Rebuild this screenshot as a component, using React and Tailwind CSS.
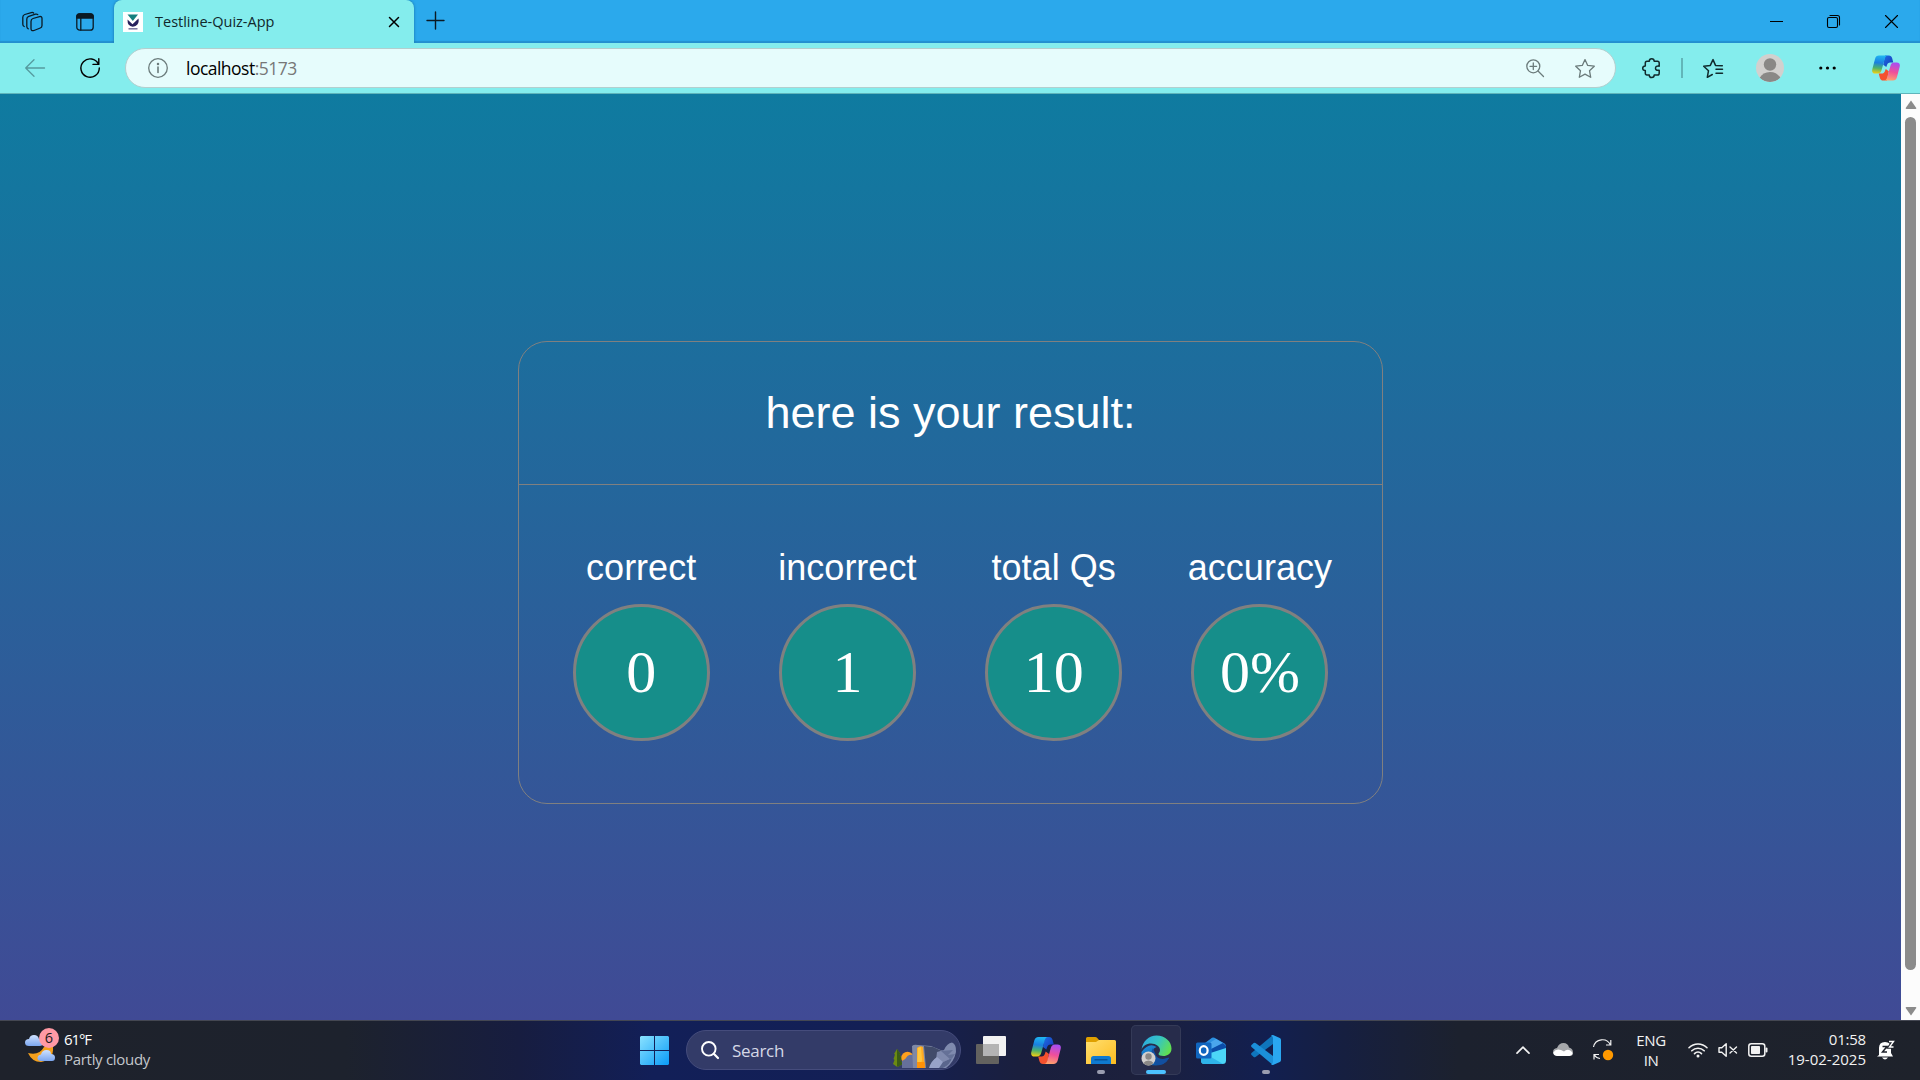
const UI = "font-['Open_Sans','Noto_Sans',sans-serif]";

const results = [
  { label: "correct", value: "0" },
  { label: "incorrect", value: "1" },
  { label: "total Qs", value: "10" },
  { label: "accuracy", value: "0%" },
];

function Icon({ w, h = w, className = "", children }) {
  return (
    <svg
      width={w}
      height={h}
      viewBox={`0 0 ${w} ${h}`}
      fill="none"
      stroke="currentColor"
      strokeWidth="1.3"
      strokeLinecap="round"
      strokeLinejoin="round"
      className={`block shrink-0 overflow-visible ${className}`}
    >
      {children}
    </svg>
  );
}

function Copilot({ w, h, id, className = "" }) {
  return (
    <svg width={w} height={h} viewBox="0 0 30 27" className={`block shrink-0 ${className}`}>
      <defs>
        <linearGradient id={`${id}a`} x1="0.4" y1="0" x2="0.3" y2="1">
          <stop offset="0" stopColor="#1fb5f2" />
          <stop offset="0.4" stopColor="#1a7fe0" />
          <stop offset="0.7" stopColor="#4db36b" />
          <stop offset="1" stopColor="#f5cf10" />
        </linearGradient>
        <linearGradient id={`${id}b`} x1="0.5" y1="0" x2="0.3" y2="1">
          <stop offset="0" stopColor="#a94df0" />
          <stop offset="0.5" stopColor="#ef4f9a" />
          <stop offset="1" stopColor="#ffa56b" />
        </linearGradient>
        <linearGradient id={`${id}c`} x1="0" y1="0" x2="1" y2="1">
          <stop offset="0" stopColor="#1d6fe6" />
          <stop offset="1" stopColor="#1636b8" />
        </linearGradient>
      </defs>
      <path d="M14 0H18C20 0 21 1 21.600 3L22.800 7.500H19.500C17.600 7.500 16.600 8.500 16 10.500L15.300 12.500L12 10Z" fill={`url(#${id}c)`} />
      <path d="M16 27H12C10 27 9 26 8.400 24L7.200 19.500H10.500C12.400 19.500 13.400 18.500 14 16.500L14.700 14.500L18 17Z" fill="#f4512e" />
      <path d="M7.500 0H17C15 0 14.300 1.400 13.700 3.500L10.200 16C9.500 18.300 8.300 19.500 6.200 19.500H3.500C.6 19.500 -.4 17.400 .4 14.700L3.300 3.500C4 1.200 5.200 0 7.500 0Z" fill={`url(#${id}a)`} />
      <path d="M22.500 27H13C15 27 15.700 25.600 16.300 23.500L19.800 11C20.500 8.700 21.700 7.500 23.800 7.500H26.500C29.400 7.500 30.400 9.600 29.600 12.300L26.700 23.500C26 25.800 24.800 27 22.500 27Z" fill={`url(#${id}b)`} />
    </svg>
  );
}

function TitleBar() {
  return (
    <div className="flex h-[43px] items-start bg-[#2ba9ec] text-[#0b1a24] shadow-[inset_0_-2px_1px_#238fd0]">
      <div className="flex h-[43px] w-[114px] items-center pl-[22px]">
        <Icon w={21} h={20}>
          <path d="M11 6.500 17.500 4.600Q20 4 20 6.500V13.500Q20 15.400 18.300 16L12 18.500Q9 19.400 9 16.500V9.500Q9 7.200 11 6.500Z" />
          <path d="M6.300 16.800Q4.800 16.300 4.800 14.500V7Q4.800 5 6.800 4.300L13.500 2.200Q15 1.800 15.800 2.600" />
          <path d="M2.200 14.500Q.8 14 .8 12.300V5.200Q.8 3.200 2.800 2.500L9.300 .6Q10.800 .2 11.600 1" />
        </Icon>
        <Icon w={18} h={18} className="ml-[33px]">
          <rect x="0.800" y="0.800" width="16.400" height="16.400" rx="3" />
          <path d="M.8 5V3.500Q.8 .8 3.500 .8H14.500Q17.200 .8 17.200 3.500V5Z" fill="currentColor" />
          <path d="M4.800 5V17" />
        </Icon>
      </div>
      <div className="flex h-[43px] w-[300px] items-center rounded-t-[8px] bg-[#84eded] pl-[9px] shadow-[0_0_3px_#1670a5] [clip-path:inset(0_-4px_0_-4px)]">
        <svg width="20" height="20" viewBox="0 0 20 20" className="block">
          <rect width="20" height="20" fill="#fff" />
          <path d="M4.500 2.500H15L9.800 9Z" fill="#15807f" />
          <path d="M4.500 7.500 9.500 12.200 15.500 6.500Q16.500 12 12.500 14Q8 15.800 5.500 12.500Q4.500 11 4.500 7.500Z" fill="#26215c" />
          <path d="M5.500 16.800H14.500" stroke="#77739c" strokeWidth="1.500" />
        </svg>
        <span className={`${UI} ml-[12px] w-[200px] whitespace-nowrap text-[14.5px] leading-[19px] text-[#10282c]`}>Testline-Quiz-App</span>
        <Icon w={10} className="ml-[34px] mt-px text-black">
          <path d="M.5.5 9.500 9.500M9.500.5.5 9.500" strokeWidth="1.500" />
        </Icon>
      </div>
      <Icon w={17} className="ml-[13px] mt-[12px]">
        <path d="M8.500 0V17M0 8.500H17" strokeWidth="1.400" />
      </Icon>
      <div className="ml-auto flex h-[43px] items-center pr-[22px] text-black">
        <Icon w={13}><path d="M0 6.500H13" strokeLinecap="butt" strokeWidth="1" /></Icon>
        <Icon w={13} className="ml-[44px]">
          <rect x="0.500" y="2.500" width="10" height="10" rx="1.500" strokeWidth="1.100" />
          <path d="M3 .5H10.500Q12.500.5 12.500 2.500V10" strokeWidth="1.100" />
        </Icon>
        <Icon w={13} className="ml-[45px]">
          <path d="M.5.5 12.500 12.500M12.500.5.5 12.500" strokeWidth="1.100" />
        </Icon>
      </div>
    </div>
  );
}

function Toolbar() {
  return (
    <div className="flex h-[51px] items-center border-b border-[#5fb5bb] bg-[#84eded] pl-[25px] text-[#102a2c]">
      <Icon w={20} h={18} className="text-[#559a9e]">
        <path d="M19.500 9H.7M9 .7.7 9 9 17.300" />
      </Icon>
      <Icon w={20} h={20} className="ml-[35px] text-black">
        <path d="M18.500 6.300A9.200 9.200 0 1 0 19.300 10M18.800 .7V6.400H13" strokeWidth="1.400" />
      </Icon>
      <div className="ml-[25px] flex h-[40px] w-[1491px] items-center rounded-full border border-[#b3cfcf] bg-[#e6fcfc] pl-[22px] pr-[20px] text-[#6b7b7b]">
        <Icon w={20}>
          <circle cx="10" cy="10" r="9.300" />
          <path d="M10 9V14.500" strokeWidth="1.600" />
          <circle cx="10" cy="6" r="0.600" fill="currentColor" />
        </Icon>
        <span className={`${UI} ml-[18px] whitespace-nowrap text-[17.5px] leading-[24px] tracking-[-0.52px] text-[#777]`}>
          <span className="text-black">localhost</span>:5173
        </span>
        <Icon w={18} className="ml-auto">
          <circle cx="7.300" cy="7.300" r="6.500" />
          <path d="M12 12 17.500 17.500M7.300 4V10.600M4 7.300H10.600" />
        </Icon>
        <Icon w={20} h={19} className="ml-[31px]">
          <path d="M10 .6 12.700 6.400 19.300 7.200 14.500 11.700 15.700 18.300 10 15.100 4.300 18.300 5.500 11.700 .7 7.200 7.300 6.400Z" />
        </Icon>
      </div>
      <Icon w={19} h={20} className="ml-[26px]">
        <path d="M5 3.200H7.300Q7.300.7 9.700.7T12.200 3.200H15.500Q17.200 3.200 17.200 5V8.200Q13.500 7.700 13.500 10.200T17.200 12.300V15.200Q17.200 17 15.500 17H12.200Q12.200 19.500 9.700 19.500T7.300 17H5Q3.300 17 3.300 15.200V12.500Q.7 12.500.7 10.200T3.300 7.900V5Q3.300 3.200 5 3.200" strokeWidth="1.500" />
      </Icon>
      <div className="ml-[20px] h-[20px] w-[2px] bg-[#62b6b9]" />
      <Icon w={20} h={19} className="ml-[20px]">
        <path d="M19.300 6.800 12.500 6.400 10 .6 7.300 6.400.7 7.200 5.500 11.700 4.300 18.300 9.300 15.500M13 10.200H19.500M13 14.200H19.500" strokeWidth="1.500" />
      </Icon>
      <svg width="28" height="28" viewBox="0 0 28 28" className="ml-[33px] block shrink-0">
        <clipPath id="avatar"><circle cx="14" cy="14" r="14" /></clipPath>
        <g clipPath="url(#avatar)">
          <rect width="28" height="28" fill="#d2d0ce" />
          <circle cx="14" cy="10.500" r="6.200" fill="#8a8886" />
          <path d="M3.500 24Q7 18 14 18T24.500 24Q20 28 14 28T3.500 24Z" fill="#8a8886" />
        </g>
      </svg>
      <Icon w={17} h={4} className="ml-[35px] text-black">
        <g fill="currentColor" stroke="none">
          <circle cx="1.800" cy="2" r="1.600" /><circle cx="8.500" cy="2" r="1.600" /><circle cx="15.200" cy="2" r="1.600" />
        </g>
      </Icon>
      <Copilot w={28} h={26} id="top" className="ml-[36px]" />
    </div>
  );
}

function ResultCard() {
  return (
    <section className="h-[463px] w-[865px] rounded-[29px] border border-[#808080] font-['Liberation_Sans',Arial,sans-serif] text-white">
      <h1 className="flex h-[143px] items-center justify-center border-b border-[#808080] text-[45px] leading-[52px]">
        here is your result:
      </h1>
      <div className="mx-[19px] mt-[62px] grid grid-cols-4">
        {results.map((r) => (
          <div key={r.label} className="flex flex-col items-center">
            <h2 className="whitespace-nowrap text-[36px] leading-[42px]">{r.label}</h2>
            <div className="mt-[15px] flex size-[137px] items-center justify-center rounded-full border-[3px] border-[#808080] bg-[#168e8a] pb-[2px] font-['Liberation_Serif','Times_New_Roman',serif] text-[60px] leading-none">
              {r.value}
            </div>
          </div>
        ))}
      </div>
    </section>
  );
}

function ScrollBar() {
  return (
    <div className="flex w-[19px] shrink-0 flex-col items-center bg-[#fcfcfc]">
      <svg width="12" height="9" viewBox="0 0 12 9" className="mt-[6px] block">
        <path d="M6 .5 11.300 8Q11.500 9 10.500 9H1.500Q.5 9 .7 8Z" fill="#8b8b8b" />
      </svg>
      <div className="mt-[8px] h-[853px] w-[11px] rounded-full bg-[#8b8b8b]" />
      <svg width="12" height="9" viewBox="0 0 12 9" className="mt-auto mb-[4px] block">
        <path d="M6 8.500 11.300 1Q11.500 0 10.500 0H1.500Q.5 0 .7 1Z" fill="#8b8b8b" />
      </svg>
    </div>
  );
}

function Weather() {
  return (
    <div className="flex h-full w-[640px] items-start pl-[24px]">
      <svg width="36" height="36" viewBox="0 0 36 36" className="mt-[6px] block">
        <defs>
          <linearGradient id="cloud" x1="0" y1="0" x2="0" y2="1">
            <stop offset="0" stopColor="#cfe2ff" /><stop offset="1" stopColor="#7ba6ef" />
          </linearGradient>
        </defs>
        <path d="M20 20Q27 18 29 20Q30 33 17 35Q8 35 4 26Q15 29 20 20Z" fill="#f4a01c" />
        <path d="M5 19Q1 19 1 15.500T5 12Q6 8 10 8T15 12Q19 12 19 15.500T15.500 19Z" fill="url(#cloud)" />
        <path d="M17 34Q13.500 34 13.500 31T17 27.500Q18 23 22.500 23T27 27Q31 27 31 30.500T28 34Z" fill="url(#cloud)" />
        <circle cx="25" cy="11" r="10" fill="#ff99a4" />
        <text x="25" y="16.200" textAnchor="middle" fontSize="14.5" fontFamily="Open Sans" fill="#1b1b1b">6</text>
      </svg>
      <div className="ml-[4px] mt-[8px] flex flex-col text-[15px] leading-[20px]">
        <span className="tracking-[-1.1px] text-white">61°F</span>
        <span className="tracking-[-0.3px] text-[#c4c7cb]">Partly cloudy</span>
      </div>
    </div>
  );
}

function SearchBox() {
  return (
    <div className="ml-[17px] flex h-[40px] w-[275px] items-center rounded-full border border-[#454c7c] bg-[#333b68] pl-[14px] text-[#d5d8e6]">
      <Icon w={18} className="text-white">
        <circle cx="7.800" cy="7.800" r="6.800" strokeWidth="1.900" />
        <path d="M12.800 12.800 17 17" strokeWidth="2.200" />
      </Icon>
      <span className="ml-[13px] text-[17px] leading-none tracking-[-0.3px]">Search</span>
      <svg width="64" height="27" viewBox="0 0 64 27" className="ml-auto mr-[3px] mt-[10px] block">
        <path d="M4 7 7.500 12 6.500 12.500 9 17 7.500 18 9.500 22 5.500 24.500H3.500L0 22 1.500 18 .5 17 2 12.500 1 12Z" fill="#6c8a12" />
        <path d="M4 7 7.500 12 6.500 12.500 9 17 7.500 18 9.500 22 5.500 24.500H4Z" fill="#3a5c16" />
        <circle cx="14.500" cy="16" r="6.200" fill="#ffa01e" />
        <path d="M9 26V19Q13 17 14.500 14Q17 12 20 13V26Z" fill="#66709a" />
        <path d="M19 4Q21 2 25 3L38 4 50 9 48 26H20Z" fill="#7f88a5" />
        <path d="M31 4 40 5 51 10 41 18 37 26H33Z" fill="#414b6a" />
        <path d="M44 10 51 8Q54 1 59 .5Q63.500 2 63 10Q61 20 53 26H42Z" fill="#7f8aae" />
        <path d="M48 9 60 8 55 13 62 12 58 18Z" fill="#657197" />
        <path d="M36 26Q38 19 44 15L50 20 59 16Q57 23 50 26Z" fill="#98a3c8" />
        <path d="M46 26 50 20 59 16Q57 23 50 26Z" fill="#5a668d" />
        <path d="M24 6Q27 3 30 5L32 26H24Z" fill="#ffab22" />
        <path d="M25 6 28 5 29 18 27 26H24Z" fill="#ffc63d" />
        <path d="M24 20H31.500L32 26H24Z" fill="#ff9208" />
      </svg>
    </div>
  );
}

function AppSlot({ active, mark, children }) {
  return (
    <div className={`relative flex h-[50px] w-[50px] shrink-0 items-center justify-center rounded-[5px] ${active ? "bg-[#272c4b] ring-1 ring-inset ring-[#343a57]" : ""}`}>
      {children}
      {mark && <span className={`absolute bottom-[1px] h-[4px] rounded-full ${active ? "w-[20px] bg-[#4cc2ff]" : "w-[8px] bg-[#9a9db0]"}`} />}
    </div>
  );
}

function Apps() {
  return (
    <div className="ml-[5px] flex items-center gap-[5px]">
      <AppSlot>
        <svg width="30" height="28" viewBox="0 0 30 28">
          <rect y="8" width="23" height="20" rx="1" fill="#63625f" />
          <rect x="7" width="23" height="20" rx="1" fill="#f2f2f2" />
          <rect x="7" y="8" width="16" height="12" fill="#b4b4b4" />
        </svg>
      </AppSlot>
      <AppSlot><Copilot w={30} h={27} id="bar" /></AppSlot>
      <AppSlot mark>
        <svg width="30" height="27" viewBox="0 0 30 27">
          <defs>
            <linearGradient id="folder" x1="0" y1="0" x2="1" y2="1">
              <stop offset="0" stopColor="#ffdf70" /><stop offset="1" stopColor="#fdbc1f" />
            </linearGradient>
          </defs>
          <path d="M0 1.500Q0 0 1.500 0H9Q10.500 0 11.500 1.200L13 3V8H0Z" fill="#dfa000" />
          <path d="M0 5H10L13 3H28.500Q30 3 30 4.500V27H0Z" fill="url(#folder)" />
          <path d="M5 27V21.500Q5 19 7.500 19H22.500Q25 19 25 21.500V27Z" fill="#0f7ad0" />
          <path d="M8.500 22.800H21.500" stroke="#064c8c" strokeWidth="1.200" />
        </svg>
      </AppSlot>
      <AppSlot active mark>
        <svg width="31" height="31" viewBox="0 0 31 31">
          <defs>
            <linearGradient id="edgeTop" x1="0" y1="0.200" x2="1" y2="0.600">
              <stop offset="0" stopColor="#2ca8e0" /><stop offset="0.500" stopColor="#35c4c5" /><stop offset="1" stopColor="#62e04e" />
            </linearGradient>
            <linearGradient id="edgeLow" x1="0" y1="0" x2="0.600" y2="1">
              <stop offset="0" stopColor="#1c92df" /><stop offset="1" stopColor="#0c4f9e" />
            </linearGradient>
          </defs>
          <path d="M.5 17C0 24 6 30.500 15 30.500Q24 30.500 28 23Q27 22.500 25 23.500Q17 26.500 13 20Q10 14 15.500 12Q8 7 .5 17Z" fill="url(#edgeLow)" />
          <path d="M12 13Q8 20 12 26Q16 31 22 29Q26 27 28 23Q27 22.500 25 23.500Q16 25.500 14 18Z" fill="#124f9f" />
          <path d="M.5 15C1.500 6 8 .5 15.500 .5C24 .5 30.500 6.500 30.500 13.500C30.500 19 26 21 22.500 21C19.500 21 17.500 20 17.500 19C17.500 18 19 17.500 19 15C19 11.500 15 8.500 10 8.500C5.500 8.500 1.500 11 .5 15Z" fill="url(#edgeTop)" />
          <circle cx="7.500" cy="23.500" r="7" fill="#d2d0ce" />
          <circle cx="7.500" cy="21.500" r="3.200" fill="#8a8886" />
          <path d="M2.500 28Q4 25.500 7.500 25.500T12.500 28Q10.500 30.500 7.500 30.500T2.500 28Z" fill="#8a8886" />
        </svg>
      </AppSlot>
      <AppSlot>
        <svg width="30" height="27" viewBox="0 0 30 27">
          <path d="M5 9 16 .8Q17 0 18.500 .8L28.500 6.500Q30 7.500 30 9V14L17 20 5 12Z" fill="#2a8fe0" />
          <path d="M10 8 20 2 28.500 7 15 16Z" fill="#4aa6ec" />
          <path d="M15 12 27 6 30 9V13L16 21Z" fill="#0b4da8" />
          <path d="M5 19 30 11V23.500Q30 27 26.500 27H8.500Q5 27 5 23.500Z" fill="#4cd6f7" />
          <path d="M5 20 15 20 27 27H8.500Q5 27 5 23.500Z" fill="#2fb4ea" />
          <rect y="5.500" width="15.500" height="16" rx="1.500" fill="#1066c0" />
          <ellipse cx="7.700" cy="13.500" rx="3.900" ry="4.300" fill="none" stroke="#fff" strokeWidth="2.200" />
        </svg>
      </AppSlot>
      <AppSlot mark>
        <svg width="30" height="30" viewBox="0 0 30 30">
          <path d="M22 0 22 9 4.500 22Q3.500 22.500 2.700 22L.5 20Q-.3 19 .5 18Z" fill="#0f76bd" />
          <path d="M22 30 22 21 4.500 8Q3.500 7.500 2.700 8L.5 10Q-.3 11 .5 12Z" fill="#1b8fd8" />
          <path d="M22 0 28.800 3Q30 3.700 30 5V25Q30 26.300 28.800 27L22 30Q20.500 30 20 29 22 29 22 27V3Q22 1 20 1 20.500 0 22 0Z" fill="#2aa7f1" />
        </svg>
      </AppSlot>
    </div>
  );
}

function Tray() {
  return (
    <div className="ml-auto flex h-full items-center pr-[26px] text-[#f2f2f2]">
      <Icon w={14} h={8}><path d="M1 7.200 7 1.200 13 7.200" strokeWidth="1.700" /></Icon>
      <svg width="20" height="14" viewBox="0 0 20 14" className="ml-[23px] block">
        <path d="M4 13Q0 12.500 0 9T4 5Q6 0 10.500 0T16 4.500Q20 5.500 20 9.500T16 13Z" fill="#a5a7aa" />
        <path d="M4 13Q.5 12.500.3 9.500Q3 5 8 7L11 8.500Q14 5.500 18 8Q20 10 19.500 11T16.500 13Z" fill="#fff" />
      </svg>
      <svg width="22" height="22" viewBox="0 0 22 22" className="ml-[19px] block">
        <path d="M1.500 8A9 9 0 0 1 18.500 6M18.800 1V6H14M7 15.500H2V20.500M2 15.500Q4 19 8 19.500" fill="none" stroke="#f2f2f2" strokeWidth="1.200" />
        <circle cx="16" cy="16" r="5.200" fill="#ff9900" />
      </svg>
      <div className="mb-px ml-[21px] flex w-[32px] flex-col items-center text-[15px] leading-[20px] tracking-[-0.4px]"><span>ENG</span><span>IN</span></div>
      <Icon w={20} h={16} className="ml-[21px]">
        <path d="M1 5.700A12.700 12.700 0 0 1 19 5.700M3.800 8.800A8.800 8.800 0 0 1 16.200 8.800M6.500 11.600A5 5 0 0 1 13.500 11.600" strokeWidth="1.600" />
        <circle cx="10" cy="14" r="1.500" fill="currentColor" stroke="none" />
      </Icon>
      <Icon w={19} h={14} className="ml-[10px]">
        <path d="M1 4.700H3.800L8.200 .8V13.200L3.800 9.300H1ZM12 4 18.500 10M18.500 4 12 10" strokeWidth="1.400" />
      </Icon>
      <Icon w={20} h={14} className="ml-[11px]">
        <rect x="0.800" y="0.800" width="16" height="12.400" rx="2.500" strokeWidth="1.500" />
        <rect x="3" y="3" width="9" height="8" rx="0.800" fill="currentColor" stroke="none" />
        <path d="M18.500 5.500V8.500" strokeWidth="2" />
      </Icon>
      <div className="mb-[2px] ml-[19px] flex w-[79px] flex-col items-end whitespace-nowrap text-[15px] leading-[20px]">
        <span className="tracking-[-0.2px]">01:58</span>
        <span>19-02-2025</span>
      </div>
      <svg width="17" height="19" viewBox="0 0 17 19" className="ml-[11px] block overflow-visible">
        <path d="M2 14V7Q2 1 8 1Q14 1 14 7V12L16 15.500H0Z" fill="#fff" />
        <path d="M5 16.500Q8 20.500 11 16.500Z" fill="#fff" />
        <path d="M5.500 5.500H10L5.500 11H10" fill="none" stroke="#1e222b" strokeWidth="1.500" />
        <path d="M12 .5H16.500L12.500 6H16.500" fill="none" stroke="#1e222b" strokeWidth="3.500" />
        <path d="M12 .5H16.500L12.500 6H16.500" fill="none" stroke="#fff" strokeWidth="1.400" />
      </svg>
    </div>
  );
}

function Taskbar() {
  return (
    <footer className={`${UI} flex h-[60px] items-center overflow-hidden border-t border-[#444752] bg-[linear-gradient(90deg,#1e222b_0%,#1d222d_18%,#171d40_27%,#121f58_34%,#131f55_46%,#1a1f3e_53%,#1c203c_59%,#121f50_66%,#161f40_70%,#1c212e_76%,#1e222b_100%)] pb-px`}>
      <Weather />
      <svg width="29" height="29" viewBox="0 0 29 29" className="block shrink-0">
        <defs>
          <linearGradient id="win" x1="0" y1="0" x2="1" y2="1">
            <stop offset="0" stopColor="#8ae2ff" /><stop offset="1" stopColor="#0a9bf8" />
          </linearGradient>
        </defs>
        <path d="M1 0H14V14H0V1ZM15 0H28L29 1V14H15ZM0 15H14V29H1L0 28ZM15 15H29V28L28 29H15Z" fill="url(#win)" />
      </svg>
      <SearchBox />
      <Apps />
      <Tray />
    </footer>
  );
}

export default function App() {
  return (
    <div className="flex h-[1080px] w-[1920px] flex-col overflow-hidden">
      <TitleBar />
      <Toolbar />
      <div className="flex min-h-0 flex-1">
        <main className="flex flex-1 items-start justify-center bg-[linear-gradient(180deg,#0f7ba0_0%,#404a95_100%)] pt-[247px]">
          <ResultCard />
        </main>
        <ScrollBar />
      </div>
      <Taskbar />
    </div>
  );
}
